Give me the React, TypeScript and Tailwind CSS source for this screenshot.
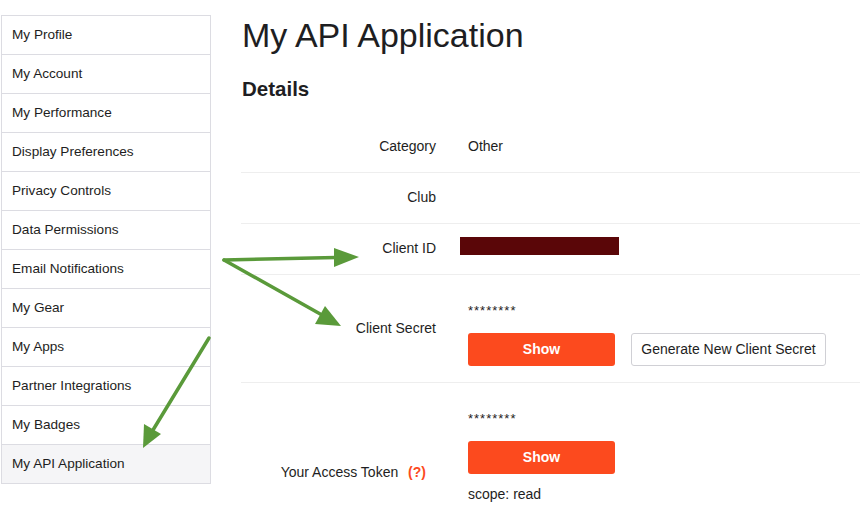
import React from "react";

const items = [
  "My Profile",
  "My Account",
  "My Performance",
  "Display Preferences",
  "Privacy Controls",
  "Data Permissions",
  "Email Notifications",
  "My Gear",
  "My Apps",
  "Partner Integrations",
  "My Badges",
  "My API Application",
];

export default function App() {
  return (
    <div
      className="relative w-[860px] h-[515px] overflow-hidden bg-white text-[#1e1e22]"
      style={{ fontFamily: "'Liberation Sans', Arial, sans-serif" }}
    >
      <div className="flex items-start">
        <div className="w-[210px] ml-[1px] mt-[15px] border-t border-l border-r border-[#dcdce2] shrink-0">
          {items.map((t, i) => (
            <div
              key={t}
              className={`h-[39px] flex items-center pl-[10px] text-[13.6px] border-b border-[#dcdce2] ${
                i === items.length - 1 ? "bg-[#f5f5f7]" : ""
              }`}
            >
              {t}
            </div>
          ))}
        </div>
        <div className="ml-[30px] flex-1">
          <h1 className="text-[34px] leading-none mt-[18px] ml-[1px]">My API Application</h1>
          <h2 className="text-[20.5px] font-bold mt-[27px] ml-[1px] leading-none">Details</h2>
          <div className="mt-[22px]">
            <div className="h-[51px] flex items-center border-b border-[#eeeeee]">
              <div className="w-[195px] text-right text-[14px]">Category</div>
              <div className="ml-[32px] text-[14px]">Other</div>
            </div>
            <div className="h-[51px] flex items-center border-b border-[#eeeeee]">
              <div className="w-[195px] text-right text-[14px]">Club</div>
            </div>
            <div className="h-[51px] flex items-center border-b border-[#eeeeee]">
              <div className="w-[195px] text-right text-[14px]">Client ID</div>
              <div className="ml-[24px] w-[159px] h-[18px] bg-[#5a0608] self-start mt-[13px]" />
            </div>
            <div className="h-[108px] flex items-start border-b border-[#eeeeee]">
              <div className="w-[195px] text-right text-[14px] self-center">Client Secret</div>
              <div className="ml-[32px] flex flex-col mt-[30px]">
                <div className="text-[13px] leading-[12px] tracking-[1px]">********</div>
                <div className="flex gap-[16px] mt-[16px]">
                  <button className="w-[147px] h-[33px] rounded-[3px] bg-[#fc4a1e] text-white font-bold text-[14px]">
                    Show
                  </button>
                  <button className="w-[195px] h-[33px] rounded-[3px] bg-white border border-[#d0d0d5] text-[14px]">
                    Generate New Client Secret
                  </button>
                </div>
              </div>
            </div>
            <div className="h-[140px] flex items-start">
              <div className="w-[195px] text-right text-[14px] leading-[16px] mt-[81px] pr-[10px]">
                Your Access Token{" "}
                <span className="text-[#fc4a1e] font-bold ml-[6px]">(?)</span>
              </div>
              <div className="ml-[32px] flex flex-col mt-[30px]">
                <div className="text-[13px] leading-[12px] tracking-[1px]">********</div>
                <button className="mt-[16px] w-[147px] h-[33px] rounded-[3px] bg-[#fc4a1e] text-white font-bold text-[14px]">
                  Show
                </button>
                <div className="text-[14px] leading-[16px] mt-[12px]">scope: read</div>
              </div>
            </div>
          </div>
        </div>
      </div>
      <svg className="absolute left-0 top-0 pointer-events-none" width="860" height="515">
        <g stroke="#5a9a3a" strokeWidth="3.5" fill="#5a9a3a" strokeLinecap="round">
          <line x1="224" y1="260" x2="336" y2="257.6" />
          <polygon points="359,257 334,248 334,267" stroke="none" />
          <line x1="224" y1="260" x2="322" y2="315" />
          <polygon points="341,326 315,324 325,306" stroke="none" />
          <line x1="209" y1="338" x2="153" y2="430" />
          <polygon points="143,448 144,424 161,434" stroke="none" />
        </g>
      </svg>
    </div>
  );
}
